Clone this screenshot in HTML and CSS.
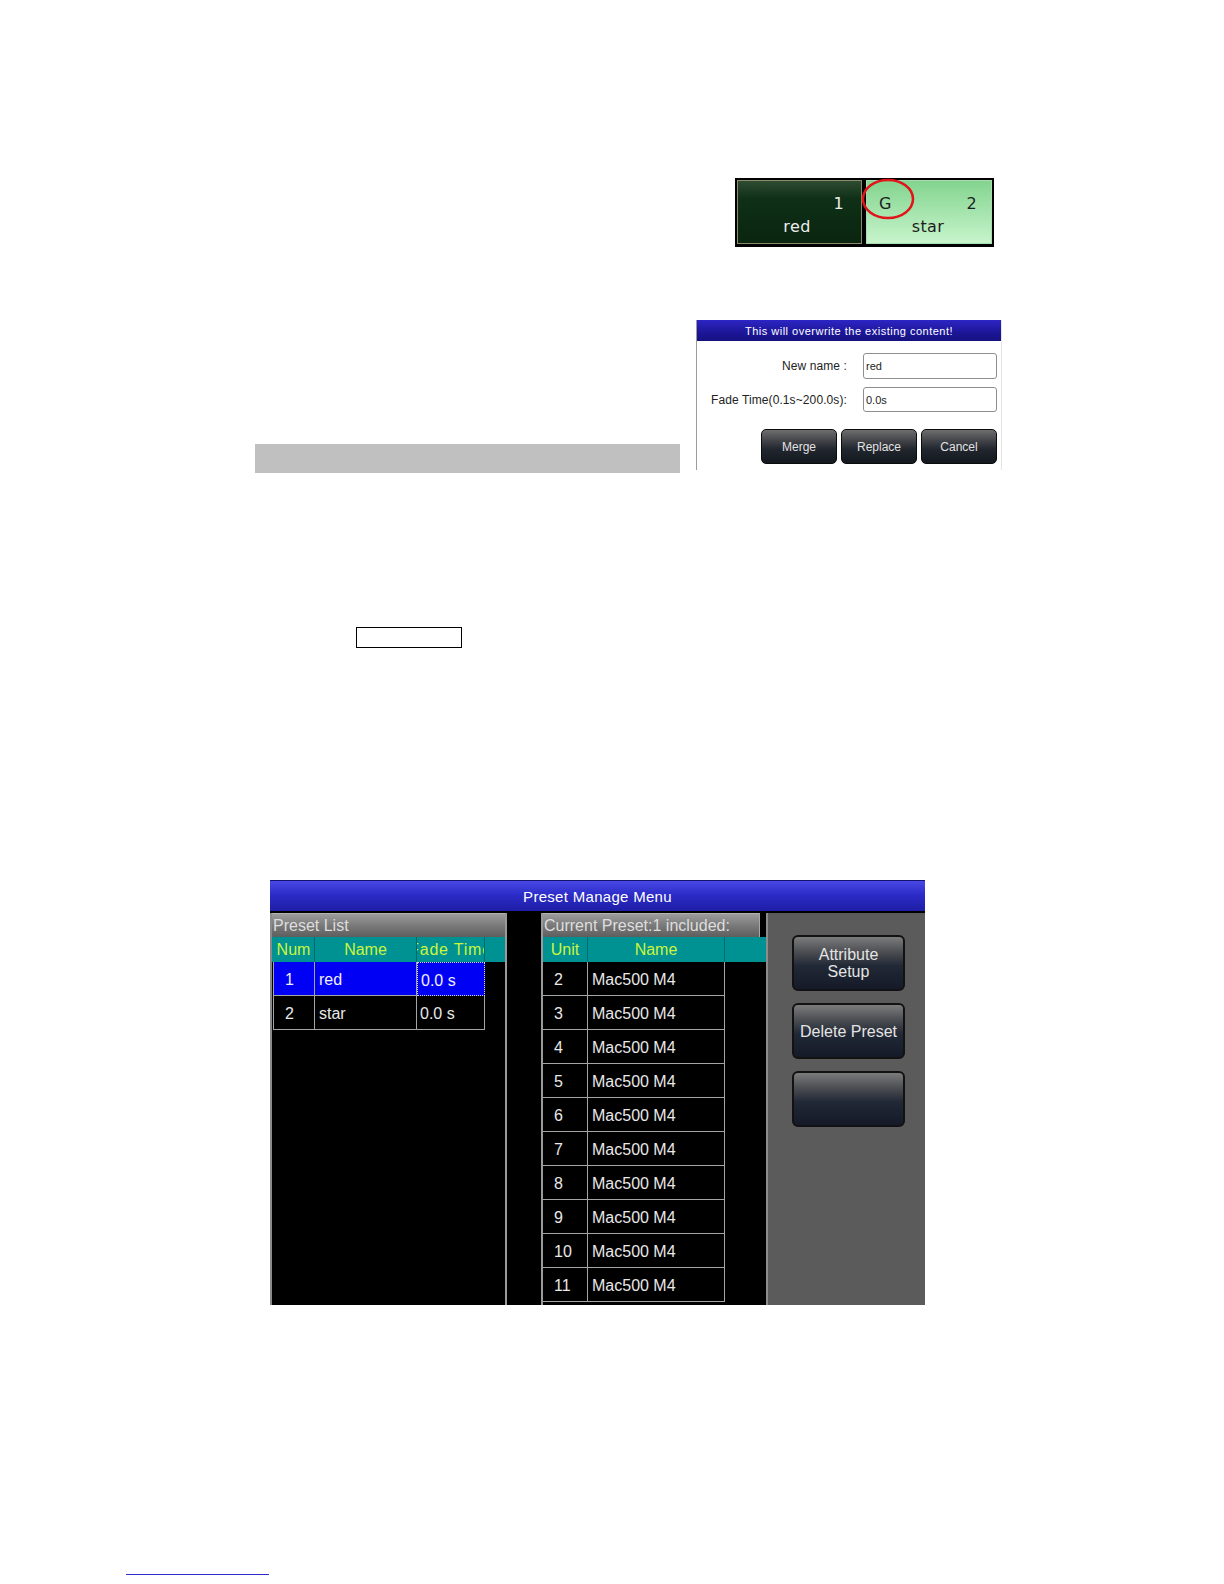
FILE: index.html
```html
<!DOCTYPE html>
<html lang="en">
<head>
<meta charset="utf-8">
<title>Preset Manage Menu</title>
<link rel="stylesheet" href="styles.css">
</head>
<body>
<div class="page">
  <div class="tiles-wrap">
    <div class="tiles">
      <div class="tile tile-dark">
        <span class="tnum">1</span>
        <span class="tname">red</span>
      </div>
      <div class="tile tile-light">
        <span class="tgroup">G</span>
        <span class="tnum">2</span>
        <span class="tname">star</span>
      </div>
      <svg class="mark" width="56" height="44" viewBox="0 0 56 44"><ellipse cx="28" cy="22" rx="25" ry="19" fill="none" stroke="#e0141a" stroke-width="2.5"/></svg>
    </div>
  </div>

  <div class="row2">
    <div class="graybar"></div>
    <div class="dialog">
      <div class="dlg-title">This will overwrite the existing content!</div>
      <div class="dlg-form">
        <div class="dlg-label">New name :</div>
        <div class="dlg-input">red</div>
        <div class="dlg-label">Fade Time(0.1s~200.0s):</div>
        <div class="dlg-input">0.0s</div>
      </div>
      <div class="dlg-buttons">
        <div class="dlg-btn">Merge</div>
        <div class="dlg-btn">Replace</div>
        <div class="dlg-btn">Cancel</div>
      </div>
    </div>
  </div>

  <div class="boxrow"><div class="emptybox"></div></div>

  <div class="screen-wrap">
    <div class="screen">
      <div class="scr-title">Preset Manage Menu</div>
      <div class="scr-body">
        <div class="panel panel-left">
          <div class="pnl-head">Preset List</div>
          <div class="thead thead-left">
            <div class="th w-num">Num</div>
            <div class="th w-name">Name</div>
            <div class="th w-fade th-clip"><span>Fade Time</span></div>
            <div class="th th-fill"></div>
          </div>
          <div class="trow trow-left">
            <div class="td w-num first sel">1</div>
            <div class="td w-name sel">red</div>
            <div class="td w-fade sel focus">0.0 s</div>
          </div>
          <div class="trow trow-left">
            <div class="td w-num first">2</div>
            <div class="td w-name">star</div>
            <div class="td w-fade">0.0 s</div>
          </div>
        </div>
        <div class="panel-gap"></div>
        <div class="panel panel-mid">
          <div class="pnl-head">Current Preset:1 included:</div>
          <div class="thead">
            <div class="th w-unit">Unit</div>
            <div class="th w-uname">Name</div>
            <div class="th th-fill"></div>
          </div>
          <div class="trow"><div class="td w-unit">2</div><div class="td w-uname">Mac500 M4</div></div>
          <div class="trow"><div class="td w-unit">3</div><div class="td w-uname">Mac500 M4</div></div>
          <div class="trow"><div class="td w-unit">4</div><div class="td w-uname">Mac500 M4</div></div>
          <div class="trow"><div class="td w-unit">5</div><div class="td w-uname">Mac500 M4</div></div>
          <div class="trow"><div class="td w-unit">6</div><div class="td w-uname">Mac500 M4</div></div>
          <div class="trow"><div class="td w-unit">7</div><div class="td w-uname">Mac500 M4</div></div>
          <div class="trow"><div class="td w-unit">8</div><div class="td w-uname">Mac500 M4</div></div>
          <div class="trow"><div class="td w-unit">9</div><div class="td w-uname">Mac500 M4</div></div>
          <div class="trow"><div class="td w-unit">10</div><div class="td w-uname">Mac500 M4</div></div>
          <div class="trow"><div class="td w-unit">11</div><div class="td w-uname">Mac500 M4</div></div>
        </div>
        <div class="panel-right">
          <div class="scr-btn">Attribute<br>Setup</div>
          <div class="scr-btn">Delete Preset</div>
          <div class="scr-btn"></div>
        </div>
      </div>
    </div>
  </div>

  <div class="footline"></div>
</div>
</body>
</html>
```

FILE: styles.css
```css
html, body {
  margin: 0;
  padding: 0;
  background: #ffffff;
}

.page {
  width: 1224px;
  height: 1584px;
  overflow: hidden;
  font-family: "Liberation Sans", Arial, sans-serif;
}

/* ---------- preset tiles ---------- */
.tiles-wrap {
  padding: 178px 0 0 735px;
}

.tiles {
  position: relative;
  width: 259px;
  height: 69px;
  box-sizing: border-box;
  background: #000;
  padding: 2px 2px 3px 2px;
  display: flex;
  gap: 4px;
  font-family: "DejaVu Sans", sans-serif;
  font-size: 16px;
  letter-spacing: 0.4px;
}

.tile {
  box-sizing: border-box;
  height: 64px;
  display: grid;
  grid-template-columns: 1fr auto;
  grid-template-rows: 18px 18px;
  row-gap: 5px;
  line-height: 18px;
}

.tile-dark {
  width: 125px;
  border: 1px solid #8c8a68;
  padding: 14px 17px 0 12px;
  color: #ececec;
  background: linear-gradient(#2e4c32 0%, #0f3017 28%, #0a2510 100%);
}

.tile-light {
  width: 126px;
  border: 1px solid #a6dcae;
  padding: 14px 14px 0 12px;
  color: #1e1e1e;
  background: linear-gradient(#84d48f 0%, #a8e6b0 55%, #c8f4cc 100%);
}

.tile .tnum {
  grid-column: 2;
  grid-row: 1;
}

.tile .tgroup {
  grid-column: 1;
  grid-row: 1;
}

.tile .tname {
  grid-column: 1 / 3;
  grid-row: 2;
  text-align: center;
}

.mark {
  position: absolute;
  left: 125px;
  top: -1px;
}

/* ---------- bar + dialog ---------- */
.row2 {
  margin-top: 73px;
  padding-left: 255px;
  display: flex;
  align-items: flex-start;
  gap: 16px;
}

.graybar {
  width: 425px;
  height: 29px;
  margin-top: 124px;
  background: #c0c0c0;
}

.dialog {
  width: 306px;
  height: 150px;
  box-sizing: border-box;
  border-left: 1px solid #9c9c9c;
  border-right: 1px solid #e4e4e4;
  background: #ffffff;
  font-size: 12px;
  color: #222;
}

.dlg-title {
  height: 21px;
  box-sizing: border-box;
  padding-top: 2px;
  line-height: 19px;
  text-align: center;
  font-size: 11px;
  letter-spacing: 0.5px;
  color: #ffffff;
  background: linear-gradient(#2d25c4, #1c1698 60%, #16117f);
}

.dlg-form {
  display: grid;
  grid-template-columns: 150px 134px;
  grid-template-rows: 26px 25px;
  column-gap: 16px;
  row-gap: 8px;
  padding-top: 12px;
}

.dlg-label {
  text-align: right;
  align-self: center;
  white-space: nowrap;
  letter-spacing: 0.1px;
}

.dlg-input {
  box-sizing: border-box;
  border: 1px solid #8e8e8e;
  border-radius: 3px;
  background: #fff;
  padding-left: 2px;
  font-size: 11px;
  display: flex;
  align-items: center;
}

.dlg-buttons {
  display: flex;
  justify-content: flex-end;
  gap: 4px;
  margin-top: 17px;
  padding-right: 4px;
}

.dlg-btn {
  width: 76px;
  height: 35px;
  box-sizing: border-box;
  border: 1px solid #0c0c0c;
  border-radius: 5px;
  background: linear-gradient(#6e6e6e 0%, #45474b 30%, #22262e 58%, #13171e 100%);
  color: #e2e2e2;
  font-size: 12px;
  display: flex;
  align-items: center;
  justify-content: center;
}

/* ---------- empty box ---------- */
.boxrow {
  margin-top: 154px;
  padding-left: 356px;
}

.emptybox {
  width: 106px;
  height: 21px;
  box-sizing: border-box;
  border: 1px solid #000;
}

/* ---------- console screen ---------- */
.screen-wrap {
  margin-top: 232px;
  padding-left: 270px;
}

.screen {
  width: 655px;
  height: 425px;
  background: #000;
  display: flex;
  flex-direction: column;
  overflow: hidden;
  color: #e8e8e8;
  font-size: 16px;
}

.scr-title {
  height: 31px;
  box-sizing: border-box;
  border-top: 1px solid #14146e;
  padding-top: 2px;
  line-height: 28px;
  text-align: center;
  font-size: 15px;
  letter-spacing: 0.3px;
  color: #ffffff;
  background: linear-gradient(#4848e6 0%, #2c2cc8 45%, #1e1ea6 100%);
}

.scr-body {
  flex: 1;
  display: flex;
  padding-top: 2px;
  min-height: 0;
}

.panel {
  box-sizing: border-box;
  display: flex;
  flex-direction: column;
}

.panel-left {
  width: 237px;
  border-left: 2px solid #8a8a8a;
  border-right: 2px solid #9a9a9a;
}

.panel-gap {
  width: 34px;
}

.panel-mid {
  width: 225px;
  border-left: 2px solid #9a9a9a;
}

.pnl-head {
  height: 24px;
  box-sizing: border-box;
  border-top: 1px solid #b4b4b4;
  padding-left: 1px;
  line-height: 23px;
  color: #dedede;
  white-space: nowrap;
  overflow: hidden;
  background: linear-gradient(#9c9c9c 0%, #7a7a7a 50%, #5e5e5e 100%);
}

.panel-mid .pnl-head {
  margin-right: 6px;
  border-right: 1px solid #a8a8a8;
}

.thead {
  display: flex;
  height: 25px;
  background: #009292;
}

.thead-left {
  padding-left: 1px;
}

.th {
  box-sizing: border-box;
  height: 25px;
  border-right: 1px solid #006a6a;
  color: #cdf53a;
  display: flex;
  align-items: center;
  justify-content: center;
  white-space: nowrap;
  overflow: hidden;
}

.th-clip span {
  flex: none;
  letter-spacing: 0.8px;
}

.th-fill {
  flex: 1;
  border-right: none;
}

.w-num { width: 42px; }
.w-name { width: 102px; }
.w-fade { width: 68px; }
.w-unit { width: 45px; }
.w-uname { width: 137px; }

.trow {
  display: flex;
  height: 34px;
}

.trow-left {
  padding-left: 1px;
}

.td {
  box-sizing: border-box;
  height: 34px;
  border-right: 1px solid #a4a4a4;
  border-bottom: 1px solid #a4a4a4;
  padding: 3px 0 0 4px;
  line-height: 30px;
  white-space: nowrap;
  overflow: hidden;
}

.td.first {
  border-left: 1px solid #a4a4a4;
}

.w-num.td { padding-left: 11px; }
.w-unit.td { padding-left: 11px; }
.w-fade.td { padding-left: 3px; }

.td.sel {
  background: #0000f4;
  color: #f0f0ff;
}

.td.focus {
  border: 1px dotted #d8d8e8;
}

.panel-right {
  flex: 1;
  box-sizing: border-box;
  border-left: 2px solid #8c8c8c;
  background: #5b5b5b;
  padding: 22px 0 0 24px;
  display: flex;
  flex-direction: column;
  gap: 12px;
}

.scr-btn {
  width: 113px;
  height: 56px;
  box-sizing: border-box;
  border: 2px solid #121212;
  border-radius: 6px;
  background: linear-gradient(#7c7c7c 0%, #4d4f53 28%, #222936 55%, #141a27 100%);
  color: #e4e4e4;
  font-size: 16px;
  line-height: 17px;
  text-align: center;
  display: flex;
  align-items: center;
  justify-content: center;
}

/* ---------- footer line ---------- */
.footline {
  margin: 269px 0 0 126px;
  width: 143px;
  border-top: 1px solid #2c2cd0;
}
```
